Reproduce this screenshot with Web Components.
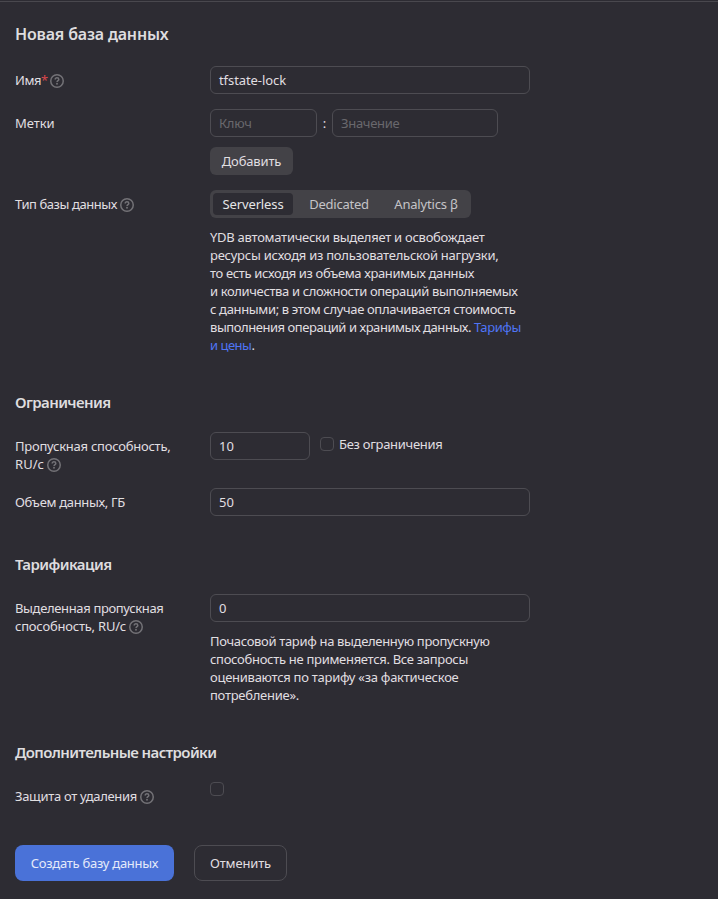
<!DOCTYPE html>
<html lang="ru">
<head>
<meta charset="utf-8">
<title>Новая база данных</title>
<style>
html,body{margin:0;background:#2d2c33}
body{font:450 13px/18px "Noto Sans","Open Sans",sans-serif;color:#e0dfe1}
</style>
</head>
<body>
<db-form></db-form>
<script>
const define = (name, html, init) => {
  const t = document.createElement('template');
  t.innerHTML = html;
  customElements.define(name, class extends HTMLElement {
    constructor() {
      super();
      this.attachShadow({mode: 'open'}).append(t.content.cloneNode(true));
    }
    connectedCallback() { if (init) init(this, this.shadowRoot); }
  });
};

/* Single line of text whose tracking is tuned to a given width. */
define('ui-text', `<style>
:host{display:inline-block;white-space:pre;vertical-align:top}
</style><span><slot></slot></span>`, (el, root) => {
  const s = root.querySelector('span');
  const n = el.textContent.length, w = parseFloat(el.getAttribute('w'));
  if (!w) return;
  s.style.letterSpacing = ((w - s.getBoundingClientRect().width) / n) + 'px';
});

define('ui-help', `<style>
:host{display:inline-block;width:14px;height:14px;margin:3px 0 0 3px;vertical-align:top;color:#737277}
svg{display:block}
</style><svg width="14" height="14" viewBox="0 0 14 14" fill="none" stroke="currentColor">
<circle cx="7" cy="7" r="6.25" stroke-width="1.5"/>
<path d="M5.2 5.5C5.2 4.4 5.9 3.8 7 3.8s1.8.65 1.8 1.6c0 1.25-1.75 1.3-1.75 2.6" stroke-width="1.5"/>
<circle cx="7" cy="9.8" r=".95" fill="currentColor" stroke="none"/></svg>`);

define('ui-title', `<style>
:host{display:block;height:20px;font-size:15px;line-height:20px;font-weight:600;color:#dedddf}
:host([main]){font-size:16px}
</style><slot></slot>`);

define('ui-row', `<style>
:host{display:grid;grid-template-columns:195px 320px;align-items:start}
.label{padding-top:5px}
</style><div class="label"><slot name="label"></slot></div><div><slot></slot></div>`);

define('ui-input', `<style>
:host{display:flex;box-sizing:border-box;width:320px;height:28px;padding:0 8px;align-items:center;border:1px solid #4d4c52;border-radius:6px}
:host([hint]){color:#69686d}
</style><slot></slot>`);

define('ui-check', `<style>
:host{display:block;box-sizing:border-box;width:14px;height:14px;border:1px solid #4d4c52;border-radius:4px}
</style>`);

define('ui-button', `<style>
:host{display:flex;box-sizing:border-box;height:28px;align-items:center;justify-content:center;border-radius:6px;background:#434247}
:host([size=l]){height:36px;border-radius:8px}
:host([view=action]){background:#4a72d8;color:#e4eafa}
:host([view=outlined]){background:none;border:1px solid #4d4c52}
</style><slot></slot>`);

define('ui-segments', `<style>
:host{display:flex;box-sizing:border-box;width:261px;height:28px;padding:3px;border-radius:6px;background:#434247;color:#c5c4c7}
::slotted(*){display:flex;align-items:center;justify-content:center;border-radius:4px}
::slotted([active]){background:#2d2c33;color:#e5e5e6}
</style><slot></slot>`);

define('ui-lines', `<style>
:host{display:flex;flex-direction:column;align-items:flex-start;padding-top:10px}
::slotted(*){height:18px}
</style><slot></slot>`);

define('db-form', `<style>
:host{display:block;box-sizing:border-box;height:898px;padding:22px 15px 0;border-top:1px solid #49484e;margin-top:1px}
.r1{margin-top:22px}
.r2,.r3{margin-top:15px}
.kv{display:flex;align-items:center}
.colon{width:15px;text-align:center}
.add{width:83px;margin-top:10px}
.limit{display:flex;gap:10px}
.limit ui-check{margin-top:5px}
.nolimit{margin:3px 0 0 -5px}
.sec{margin-top:38px}
.sec + ui-row{margin-top:20px}
.actions{display:flex;gap:20px;margin-top:40px}
.req{color:#d8464b}
a{color:#4f75f5;text-decoration:none}
</style>
<ui-title main><ui-text w="153.5">Новая база данных</ui-text></ui-title>
<ui-row class="r1"><span slot="label"><ui-text w="26">Имя</ui-text><ui-text class="req" w="6">*</ui-text><ui-help></ui-help></span>
<ui-input><ui-text w="67">tfstate-lock</ui-text></ui-input></ui-row>
<ui-row class="r2"><ui-text slot="label" w="39.5">Метки</ui-text>
<div class="kv"><ui-input hint style="width:107px"><ui-text w="32.5">Ключ</ui-text></ui-input><span class="colon">:</span><ui-input hint style="width:166px"><ui-text w="58.5">Значение</ui-text></ui-input></div>
<ui-button class="add"><ui-text w="59.5">Добавить</ui-text></ui-button></ui-row>
<ui-row class="r3"><span slot="label"><ui-text w="102">Тип базы данных</ui-text><ui-help></ui-help></span>
<ui-segments><span active style="width:80px"><ui-text w="61">Serverless</ui-text></span><span style="width:92px"><ui-text w="59.5">Dedicated</ui-text></span><span style="width:82px"><ui-text w="63.5">Analytics β</ui-text></span></ui-segments>
<ui-lines>
<ui-text w="274.5">YDB автоматически выделяет и освобождает</ui-text>
<ui-text w="288.5">ресурсы исходя из пользовательской нагрузки,</ui-text>
<ui-text w="264">то есть исходя из объема хранимых данных</ui-text>
<ui-text w="307.5">и количества и сложности операций выполняемых</ui-text>
<ui-text w="305.5">с данными; в этом случае оплачивается стоимость</ui-text>
<span><ui-text w="264">выполнения операций и хранимых данных. </ui-text><a><ui-text w="47">Тарифы</ui-text></a></span>
<span><a><ui-text w="41.5">и цены</ui-text></a><ui-text w="3">.</ui-text></span>
</ui-lines></ui-row>

<ui-title class="sec"><ui-text w="95.5">Ограничения</ui-text></ui-title>
<ui-row><span slot="label"><ui-text w="155.5">Пропускная способность,</ui-text><br><ui-text w="29">RU/с</ui-text><ui-help></ui-help></span>
<div class="limit"><ui-input style="width:100px"><ui-text w="15">10</ui-text></ui-input><ui-check></ui-check><ui-text class="nolimit" w="103.5">Без ограничения</ui-text></div></ui-row>
<ui-row style="margin-top:15px"><ui-text slot="label" w="110">Объем данных, ГБ</ui-text>
<ui-input><ui-text w="15">50</ui-text></ui-input></ui-row>

<ui-title class="sec"><ui-text w="96.5">Тарификация</ui-text></ui-title>
<ui-row><span slot="label"><ui-text w="148.5">Выделенная пропускная</ui-text><br><ui-text w="111">способность, RU/с</ui-text><ui-help></ui-help></span>
<ui-input><ui-text w="7.5">0</ui-text></ui-input>
<ui-lines>
<ui-text w="279.5">Почасовой тариф на выделенную пропускную</ui-text>
<ui-text w="258">способность не применяется. Все запросы</ui-text>
<ui-text w="248.5">оцениваются по тарифу «за фактическое</ui-text>
<ui-text w="89">потребление».</ui-text>
</ui-lines></ui-row>

<ui-title class="sec"><ui-text w="201.5">Дополнительные настройки</ui-text></ui-title>
<ui-row><span slot="label"><ui-text w="122">Защита от удаления</ui-text><ui-help></ui-help></span>
<ui-check></ui-check></ui-row>
<div class="actions"><ui-button size="l" view="action" style="width:159px"><ui-text w="127.5">Создать базу данных</ui-text></ui-button><ui-button size="l" view="outlined" style="width:93px"><ui-text w="61">Отменить</ui-text></ui-button></div>`);
</script>
</body>
</html>
